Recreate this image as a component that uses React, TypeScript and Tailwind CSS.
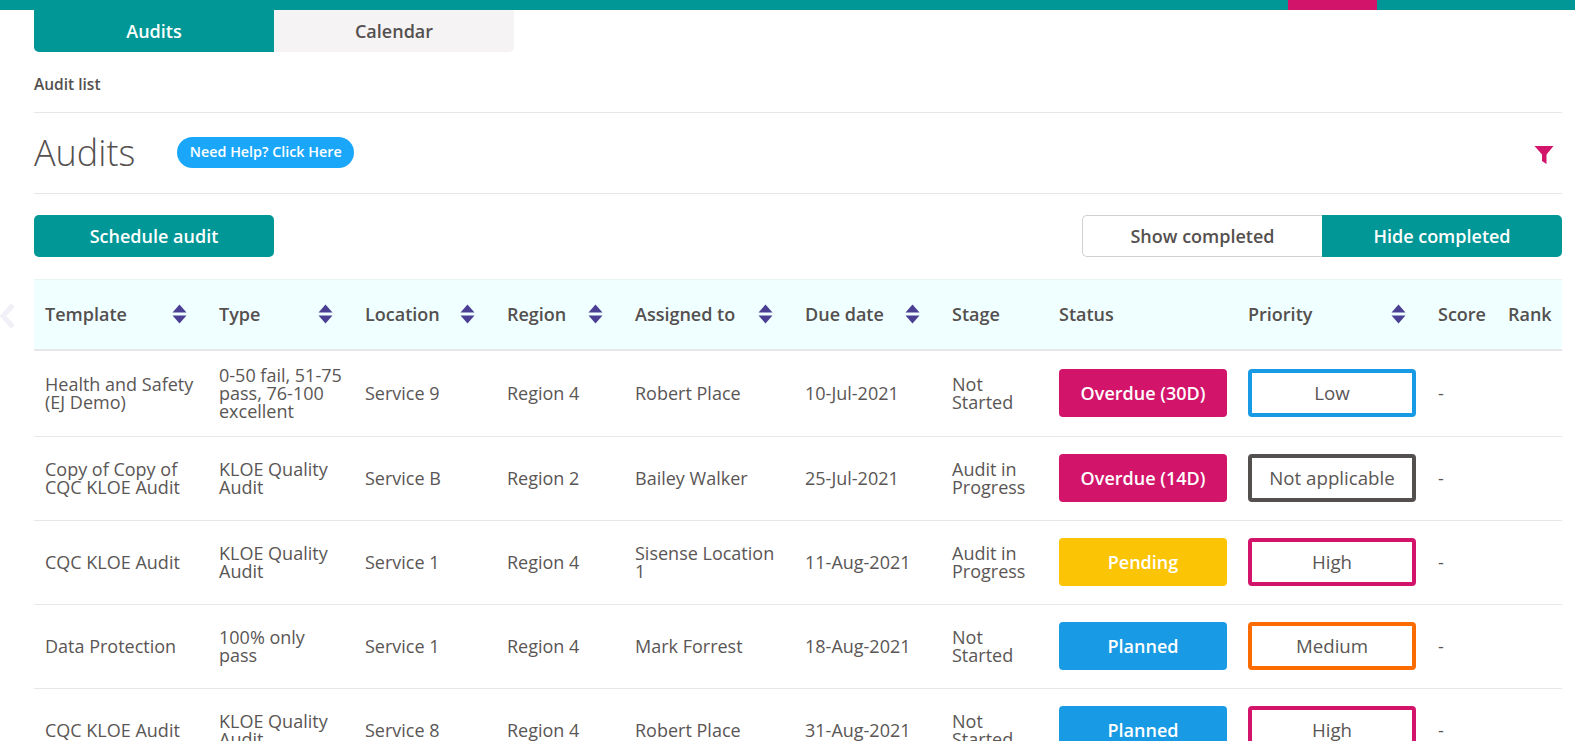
import { ReactNode } from 'react';

const font = { open: 'font-["Open_Sans",sans-serif]' };

interface Audit {
  template: string;
  type: string;
  location: string;
  region: string;
  assigned: string;
  due: string;
  stage: string;
  status: string;
  statusColor: string;
  priority: string;
  priorityColor: string;
}

const audits: Audit[] = [
  {
    template: 'Health and Safety (EJ Demo)',
    type: '0-50 fail, 51-75 pass, 76-100 excellent',
    location: 'Service 9',
    region: 'Region 4',
    assigned: 'Robert Place',
    due: '10-Jul-2021',
    stage: 'Not Started',
    status: 'Overdue (30D)',
    statusColor: 'bg-[#d2146a]',
    priority: 'Low',
    priorityColor: 'border-[#189be4]',
  },
  {
    template: 'Copy of Copy of CQC KLOE Audit',
    type: 'KLOE Quality Audit',
    location: 'Service B',
    region: 'Region 2',
    assigned: 'Bailey Walker',
    due: '25-Jul-2021',
    stage: 'Audit in Progress',
    status: 'Overdue (14D)',
    statusColor: 'bg-[#d2146a]',
    priority: 'Not applicable',
    priorityColor: 'border-[#54504f]',
  },
  {
    template: 'CQC KLOE Audit',
    type: 'KLOE Quality Audit',
    location: 'Service 1',
    region: 'Region 4',
    assigned: 'Sisense Location 1',
    due: '11-Aug-2021',
    stage: 'Audit in Progress',
    status: 'Pending',
    statusColor: 'bg-[#fbc405]',
    priority: 'High',
    priorityColor: 'border-[#d2146a]',
  },
  {
    template: 'Data Protection',
    type: '100% only pass',
    location: 'Service 1',
    region: 'Region 4',
    assigned: 'Mark Forrest',
    due: '18-Aug-2021',
    stage: 'Not Started',
    status: 'Planned',
    statusColor: 'bg-[#189be4]',
    priority: 'Medium',
    priorityColor: 'border-[#fb6b00]',
  },
  {
    template: 'CQC KLOE Audit',
    type: 'KLOE Quality Audit',
    location: 'Service 8',
    region: 'Region 4',
    assigned: 'Robert Place',
    due: '31-Aug-2021',
    stage: 'Not Started',
    status: 'Planned',
    statusColor: 'bg-[#189be4]',
    priority: 'High',
    priorityColor: 'border-[#d2146a]',
  },
];

function SortIcon() {
  return (
    <svg width="15" height="20" viewBox="0 0 15 20" className="shrink-0">
      <path d="M7.5 0.5 L14.5 8.5 H0.5 Z M0.5 11.5 H14.5 L7.5 19.5 Z" fill="#4b3f94" />
    </svg>
  );
}

function Th({ children, sort, width }: { children: ReactNode; sort?: boolean; width: string }) {
  return (
    <th className={`${width} px-[11px] text-left font-semibold`}>
      <div className="flex items-center justify-between pr-[10px]">
        <span>{children}</span>
        {sort && <SortIcon />}
      </div>
    </th>
  );
}

export default function App() {
  return (
    <div className={`${font.open} relative h-[741px] overflow-hidden bg-white text-[#54504f]`}>
      {/* top bar */}
      <div className="flex h-[10px] justify-end bg-[#009796]">
        <div className="mr-[198px] h-full w-[89px] bg-[#d2146a]" />
      </div>

      {/* faded carousel arrow in the left margin */}
      <svg width="16" height="28" viewBox="0 0 16 28" className="absolute left-0 top-[302px]">
        <path d="M13 3 L3 14 L13 25" fill="none" stroke="#f1f0f6" strokeWidth="5" />
      </svg>

      <div className="pl-[34px] pr-[13px]">
        <div className="flex h-[42px] w-[480px] text-[18px] font-semibold">
          <div className="flex w-[240px] items-center justify-center rounded-bl-[5px] bg-[#009796] text-white">
            Audits
          </div>
          <div className="flex w-[240px] items-center justify-center rounded-br-[5px] bg-[#f6f3f4]">
            Calendar
          </div>
        </div>

        <div className="flex h-[61px] items-center border-b border-[#e7e7e7] pt-[6px] text-[15.5px] font-semibold">
          Audit list
        </div>

        <div className="flex h-[81px] items-center justify-between border-b border-[#e7e7e7]">
          <div className="flex items-center gap-[42px]">
            <h1 className="text-[36px] font-light leading-none">Audits</h1>
            <button className="mb-[2px] flex h-[31px] w-[177px] items-center justify-center rounded-full bg-[#1aa7fa] text-[14.3px] font-semibold text-white">
              Need Help? Click Here
            </button>
          </div>
          <svg width="20" height="20" viewBox="0 0 20 20" className="mr-[8px] mt-[4px]">
            <path d="M0.5 1 H19.5 L12.5 9.5 V19 L8 16 V9.5 Z" fill="#d2146a" />
          </svg>
        </div>

        <div className="flex items-center justify-between pb-[22px] pt-[21px] text-[18px] font-semibold">
          <button className="h-[42px] w-[240px] rounded-[5px] bg-[#009796] text-white">Schedule audit</button>
          <div className="flex">
            <button className="h-[42px] w-[240px] rounded-l-[5px] border border-r-0 border-[#d0d0d0] bg-white">
              Show completed
            </button>
            <button className="h-[42px] w-[240px] rounded-r-[5px] bg-[#009796] text-white">Hide completed</button>
          </div>
        </div>

        <table className="w-full table-fixed border-collapse text-[18px]">
          <thead>
            <tr className="h-[70px] border-y border-b-2 border-[#e7e7e7] border-t-[#e7f5f5] bg-[#f0ffff]">
              <Th sort width="w-[174px]">Template</Th>
              <Th sort width="w-[146px]">Type</Th>
              <Th sort width="w-[142px]">Location</Th>
              <Th sort width="w-[128px]">Region</Th>
              <Th sort width="w-[170px]">Assigned to</Th>
              <Th sort width="w-[147px]">Due date</Th>
              <Th width="w-[107px]">Stage</Th>
              <Th width="w-[189px]">Status</Th>
              <Th sort width="w-[190px]">Priority</Th>
              <Th width="w-[70px]">Score</Th>
              <Th width="w-[65px]">Rank</Th>
            </tr>
          </thead>
          <tbody className="leading-[18px] text-[#5a5655]">
            {audits.map((a, i) => {
              const cell = i === 0 ? 'px-[11px]' : 'px-[11px] pb-[2px]';
              return (
                <tr key={i} className={`${i === 0 ? 'h-[87px]' : 'h-[84px]'} border-b border-[#e7e7e7]`}>
                  <td className={cell}>{a.template}</td>
                  <td className={cell}>{a.type}</td>
                  <td className={cell}>{a.location}</td>
                  <td className={cell}>{a.region}</td>
                  <td className={cell}>{a.assigned}</td>
                  <td className={cell}>{a.due}</td>
                  <td className={cell}>{a.stage}</td>
                  <td className={cell}>
                    <div
                      className={`flex h-[48px] w-[168px] items-center justify-center rounded-[4px] font-semibold text-white ${a.statusColor}`}
                    >
                      {a.status}
                    </div>
                  </td>
                  <td className={cell}>
                    <div
                      className={`flex h-[48px] w-[168px] items-center justify-center rounded-[4px] border-4 bg-white text-[18.7px] font-medium ${a.priorityColor}`}
                    >
                      {a.priority}
                    </div>
                  </td>
                  <td className={cell}>-</td>
                  <td className={cell} />
                </tr>
              );
            })}
          </tbody>
        </table>
      </div>
    </div>
  );
}
